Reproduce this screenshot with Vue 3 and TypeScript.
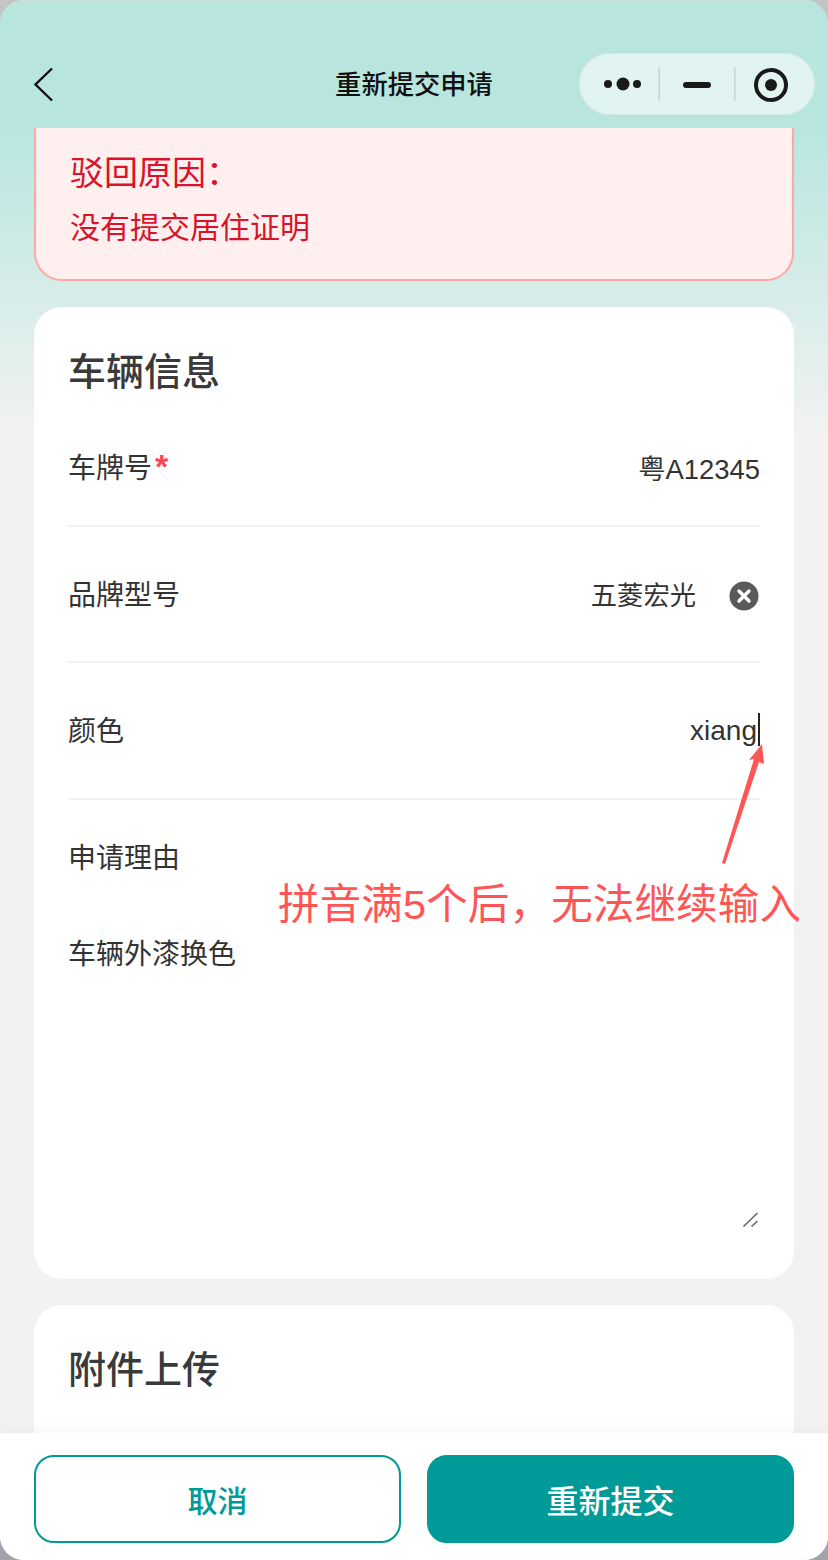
<script setup lang="ts">
const rows: { label: string; value: string }[] = [
  { label: '品牌型号', value: '五菱宏光' },
]
</script>

<template>
  <div class="frame">
    <div class="phone">
      <header class="nav">
        <svg class="back" width="24" height="36" viewBox="0 0 24 36">
          <path d="M20 1.5 3.5 17.5 20 33.5" fill="none" stroke="#111" stroke-width="2.4" />
        </svg>
        <h1 class="nav-title">重新提交申请</h1>
        <div class="capsule">
          <svg width="236" height="62" viewBox="0 0 236 62">
            <circle cx="29" cy="31" r="4" fill="#1a1a1a" />
            <circle cx="44" cy="31" r="6.5" fill="#1a1a1a" />
            <circle cx="58" cy="31" r="4" fill="#1a1a1a" />
            <rect x="79.5" y="14" width="1.6" height="34" fill="#c9d3d1" />
            <rect x="104" y="29" width="28" height="6" rx="3" fill="#1a1a1a" />
            <rect x="155" y="14" width="1.6" height="34" fill="#c9d3d1" />
            <circle cx="192" cy="32" r="15" fill="none" stroke="#1a1a1a" stroke-width="4" />
            <circle cx="192" cy="32" r="6" fill="#1a1a1a" />
          </svg>
        </div>
      </header>

      <main class="scroller">
        <section class="reject">
          <div class="reject-title">驳回原因：</div>
          <div class="reject-text">没有提交居住证明</div>
        </section>

        <section class="card form-card">
          <h2 class="card-title">车辆信息</h2>
          <div class="row row-first">
            <span class="label">车牌号<i class="star">*</i></span>
            <span class="value plate">粤A12345</span>
          </div>
          <div v-for="r in rows" :key="r.label" class="row row-brand">
            <span class="label">{{ r.label }}</span>
            <span class="value-wrap">
              <span class="value brand">{{ r.value }}</span>
              <svg class="clear" width="30" height="30" viewBox="0 0 30 30">
                <circle cx="15" cy="15" r="14.5" fill="#5a5a5a" />
                <path d="M10 10l10 10M20 10 10 20" stroke="#fff" stroke-width="3.4" stroke-linecap="round" />
              </svg>
            </span>
          </div>
          <div class="row row-color">
            <span class="label">颜色</span>
            <span class="value typed">xiang<span class="caret"></span></span>
          </div>
          <div class="reason">
            <div class="label">申请理由</div>
            <div class="reason-text">车辆外漆换色</div>
            <svg class="resize" width="18" height="16" viewBox="0 0 18 16">
              <path d="M1.5 14.5 15.5 1M9.5 14.5 15.5 9" fill="none" stroke="#666" stroke-width="1.6" />
            </svg>
          </div>

          <div class="note">
            <svg class="arrow" width="44" height="122" viewBox="0 0 44 122">
              <path d="M0 119 3 120 37 18 42 20 40 0 27 16 32 15Z" fill="#ff5555" />
            </svg>
            <span class="note-text">拼音满5个后，无法继续输入</span>
          </div>
        </section>

        <section class="card upload-card">
          <h2 class="card-title">附件上传</h2>
        </section>
      </main>

      <footer class="bar">
        <button class="btn btn-ghost" type="button">取消</button>
        <button class="btn btn-solid" type="button">重新提交</button>
      </footer>
    </div>
  </div>
</template>

<style>
html, body { margin: 0; padding: 0; }
</style>

<style scoped>
.frame {
  width: 828px;
  height: 1560px;
  background: linear-gradient(#c4c4c4 0, #c4c4c4 50%, #a3a3ab 100%);
}
.phone {
  width: 828px;
  height: 1560px;
  display: flex;
  flex-direction: column;
  overflow: hidden;
  border-radius: 24px;
  background: linear-gradient(#b8e6df 0, #b8e6df 128px, #f2f2f2 440px);
  font-family: "Liberation Sans", "Noto Sans CJK SC", sans-serif;
  color: #333;
}
.nav {
  flex: none;
  height: 128px;
  box-sizing: border-box;
  padding: 53px 13px 0 32px;
  background: #b8e6df;
  box-shadow: inset 0 1px 0 #cfdcd9;
  display: flex;
  align-items: flex-start;
  position: relative;
  z-index: 2;
}
.back { margin-top: 14px; flex: none; }
.nav-title {
  position: absolute;
  left: 0;
  right: 0;
  top: 66px;
  margin: 0;
  text-align: center;
  font-size: 26.3px;
  line-height: 38px;
  font-weight: 500;
  color: #111;
}
.capsule {
  margin-left: auto;
  width: 236px;
  height: 62px;
  border-radius: 31px;
  background: #e2f4f1;
  box-shadow: inset 0 0 0 1px #d5e8e4;
}
.capsule svg { display: block; }
.scroller {
  flex: 1;
  min-height: 0;
  overflow: hidden;
  padding: 0 34px;
}
.reject {
  box-sizing: border-box;
  height: 181px;
  margin-top: -28px;
  margin-bottom: 26px;
  padding: 47px 34px 0;
  background: #fff0ef;
  border: 2px solid #ffa8a3;
  border-radius: 28px;
  color: #d9142a;
}
.reject-title { font-size: 34px; line-height: 48px; }
.reject-text { font-size: 30px; line-height: 44px; margin-top: 9px; }
.card {
  background: #fff;
  border-radius: 28px;
  padding: 41px 34px 0;
  margin-bottom: 26px;
}
.form-card { height: 972px; box-sizing: border-box; position: relative; }
.upload-card { min-height: 300px; }
.card-title {
  margin: 0 0 12px;
  font-size: 38px;
  line-height: 48px;
  font-weight: 500;
  color: #3a3a3a;
}
.row {
  height: 137px;
  box-sizing: border-box;
  border-bottom: 2px solid #f2f2f2;
  display: flex;
  align-items: center;
  justify-content: space-between;
}
.row-first { height: 119px; align-items: flex-start; padding-top: 41px; }
.row-brand { height: 136px; padding-top: 3px; }
.row-color { padding-top: 2px; }
.label { font-size: 28px; line-height: 40px; color: #333; }
.star {
  font-style: normal;
  font-weight: 700;
  color: #ff4455;
  font-size: 34px;
  line-height: 20px;
  margin-left: 3px;
  vertical-align: 0;
}
.value { font-size: 28px; line-height: 40px; color: #333; }
.plate { margin-top: 1px; font-size: 27.4px; }
.value-wrap { display: flex; align-items: center; gap: 33px; margin-right: 1px; }
.brand { font-size: 26.3px; }
.clear { display: block; margin-right: 0; }
.typed { display: flex; align-items: center; margin-top: -2px; }
.caret {
  display: inline-block;
  width: 2px;
  height: 33px;
  margin-left: 1px;
  margin-bottom: 3px;
  background: #222;
}
.reason { position: relative; padding-top: 39px; }
.reason-text { font-size: 28px; line-height: 40px; margin-top: 56px; color: #333; }
.resize { position: absolute; right: 0; top: 412px; display: block; }
.note {
  position: absolute;
  left: 0;
  top: 0;
  width: 100%;
  height: 100%;
  pointer-events: none;
}
.arrow { position: absolute; left: 688px; top: 437px; display: block; }
.note-text {
  position: absolute;
  left: 244px;
  top: 571px;
  font-size: 41.5px;
  line-height: 54px;
  letter-spacing: 0.15px;
  color: #ff5555;
  white-space: nowrap;
}
.bar {
  flex: none;
  height: 127px;
  box-sizing: border-box;
  padding: 22px 34px 17px;
  background: #fff;
  display: flex;
  gap: 26px;
  box-shadow: 0 -4px 12px rgba(0, 0, 0, 0.03);
  position: relative;
}
.btn {
  flex: 1 1 0;
  width: 0;
  box-sizing: border-box;
  border-radius: 20px;
  border: 2px solid #009a98;
  font-family: inherit;
  font-weight: 500;
  padding: 0;
}
.btn-ghost {
  background: #fff;
  color: #009a98;
  font-size: 30px;
}
.btn-solid {
  background: #009a98;
  color: #fff;
  font-size: 32px;
}
</style>
